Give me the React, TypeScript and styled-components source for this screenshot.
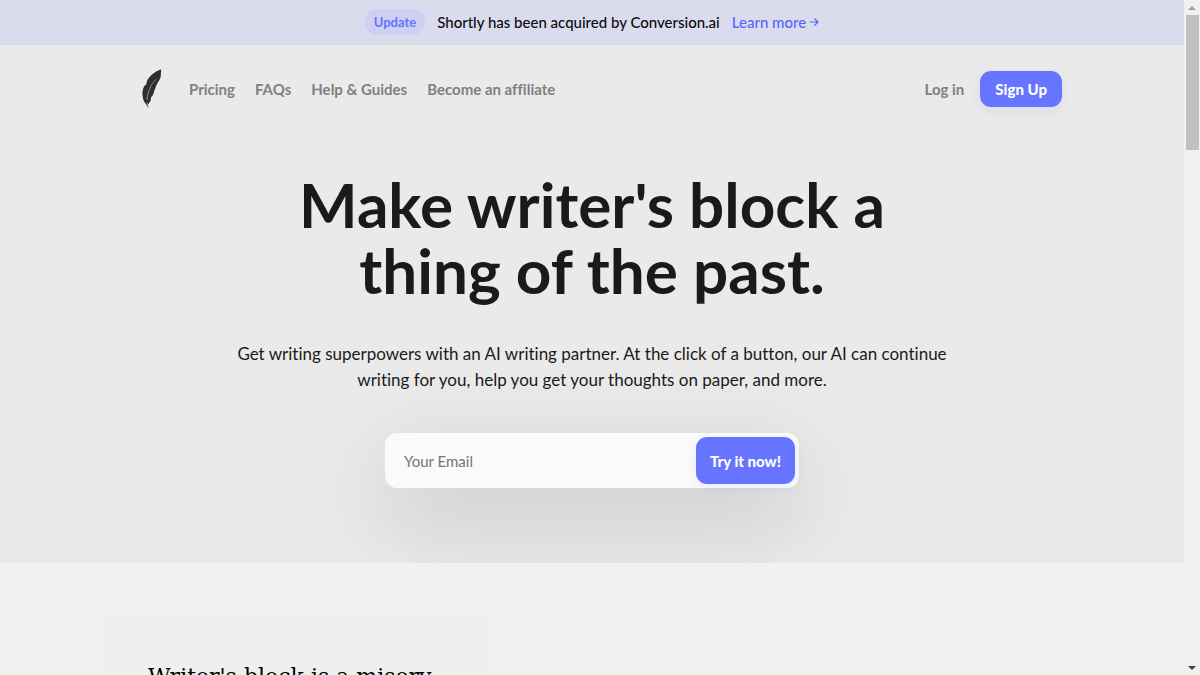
import React from "react";
import styled, { createGlobalStyle } from "styled-components";

const accent = "#6674ff";

const GlobalStyle = createGlobalStyle`
  *, *::before, *::after { box-sizing: border-box; }
  body {
    margin: 0;
    background: #f1f1f1;
    font-family: Lato, "Liberation Sans", sans-serif;
    font-variant-ligatures: none;
    color: #1a1a1a;
  }
  h1, h2, p { margin: 0; }
  a { color: inherit; text-decoration: none; }
  button, input { font: inherit; }
`;

const Shell = styled.div`
  display: grid;
  grid-template-columns: minmax(0, 1fr) 16px;
  height: 100vh;
`;

const Page = styled.div`
  overflow-y: auto;
  scrollbar-width: none;
`;

const Banner = styled.aside`
  display: flex;
  align-items: center;
  justify-content: center;
  gap: 12px;
  min-height: 45px;
  padding-bottom: 1px;
  font-size: 15px;
  font-weight: 500;
  color: #0c0c10;
  background: #dadbed;
`;

const Tag = styled.span`
  padding: 5px 9px;
  border-radius: 12px;
  font-size: 13px;
  line-height: 16px;
  font-weight: 700;
  color: ${accent};
  background: #cdcff3;
`;

const BannerLink = styled.a`
  display: inline-flex;
  align-items: center;
  gap: 4px;
  color: #5765ff;
`;

const Hero = styled.div`
  padding-bottom: 75px;
  background: #eaeaea;
  overflow: hidden;
`;

const Header = styled.header`
  display: flex;
  align-items: center;
  justify-content: space-between;
  max-width: 940px;
  margin: 0 auto;
  padding: 24px 0;
`;

const Nav = styled.nav<{ $gap: number }>`
  display: flex;
  align-items: center;
  gap: ${(p) => p.$gap}px;
  font-size: 15px;
  font-weight: 700;
  color: #808080;
`;

const LogoLink = styled.a`
  display: flex;
  padding: 0 5px 0 18px;
`;

const PrimaryButton = styled.button<{ $tall?: boolean }>`
  flex: none;
  height: ${(p) => (p.$tall ? 47 : 36)}px;
  padding: 0 ${(p) => (p.$tall ? 14 : 15)}px;
  border: 0;
  border-radius: 11px;
  font-size: 15px;
  font-weight: 900;
  color: #fff;
  background: ${accent};
  box-shadow: 0 4px 12px rgba(102, 116, 255, 0.1);
  cursor: pointer;
`;

const Intro = styled.main`
  display: flex;
  flex-direction: column;
  align-items: center;
  padding: 38px 20px 0;
  text-align: center;
`;

const Title = styled.h1`
  max-width: 700px;
  font-size: 62px;
  line-height: 66px;
  font-weight: 700;
  color: #1a1a1a;
`;

const Lead = styled.p`
  max-width: 730px;
  margin-top: 38px;
  font-size: 17px;
  line-height: 26px;
`;

const SignupForm = styled.form`
  display: flex;
  align-items: center;
  width: 100%;
  max-width: 414px;
  margin-top: 40px;
  padding: 4px;
  border-radius: 12px;
  background: #fafafa;
  box-shadow: 0 30px 90px rgba(0, 0, 0, 0.17);
`;

const EmailInput = styled.input`
  flex: 1;
  min-width: 0;
  height: 47px;
  padding: 0 15px;
  border: 0;
  outline: 0;
  font-size: 15px;
  color: #1a1a1a;
  background: transparent;
  &::placeholder { color: #757575; opacity: 1; }
`;

const Stories = styled.section`
  max-width: 980px;
  margin: 0 auto;
  padding: 47px 0;
`;

const StoryCard = styled.article`
  width: 40%;
  padding: 48px 46px;
  background: #efefef;
`;

const StoryTitle = styled.h2`
  font-family: "DejaVu Serif", serif;
  font-size: 22px;
  line-height: 38px;
  font-weight: 400;
  color: #000;
  white-space: nowrap;
`;

const Track = styled.div`
  display: flex;
  flex-direction: column;
  align-items: center;
  background: #f1f1f1;
`;

const Thumb = styled.div`
  width: 13px;
  height: 20%;
  background: #c1c1c1;
`;

const ArrowCell = styled.div<{ $end?: boolean }>`
  display: flex;
  align-items: center;
  justify-content: center;
  height: 15px;
  margin-top: ${(p) => (p.$end ? "auto" : 0)};
`;

const Feather = () => (
  <svg width="24" height="40" viewBox="0 0 24 40" aria-hidden="true">
    <path
      d="M21.200 .5C17.500 1.500 15.500 3 13 4.800C10 7.200 8 9.500 6.800 12.500L6.300 15.500L4.200 17C2.500 20.500 2 24 2.800 28C3.300 31 4.200 33.500 6 35L7.400 37.800L8 35.200C10 33.500 11.200 31.500 11 28.500L13.200 25.500C14 23 14.200 21.500 15.200 19.500L16.500 16L18 13C20 10.500 21 8 20.800 5.500Z"
      fill="#2e2e2e"
    />
    <path d="M15.800 10.500C13 13.500 11.500 15.500 10 19C8.500 23 7.300 26 7 31" fill="none" stroke="#8c8c8c" strokeWidth="1" />
    <path d="M7 33L8 38.500" fill="none" stroke="#777" strokeWidth="1" />
  </svg>
);

const RightArrow = () => (
  <svg width="9" height="10" viewBox="0 0 9 10" aria-hidden="true">
    <path d="M0 5H8M4.500 1.500L8 5L4.500 8.500" fill="none" stroke="currentColor" strokeWidth="1.200" />
  </svg>
);

export default function App() {
  return (
    <>
      <GlobalStyle />
      <Shell>
        <Page>
          <Banner>
            <Tag>Update</Tag>
            <span>Shortly has been acquired by Conversion.ai</span>
            <BannerLink href="#news">
              Learn more <RightArrow />
            </BannerLink>
          </Banner>
          <Hero>
            <Header>
              <Nav aria-label="Main" $gap={20}>
                <LogoLink href="#home" aria-label="Shortly">
                  <Feather />
                </LogoLink>
                <a href="#pricing">Pricing</a>
                <a href="#faqs">FAQs</a>
                <a href="#help">Help &amp; Guides</a>
                <a href="#affiliate">Become an affiliate</a>
              </Nav>
              <Nav aria-label="Account" $gap={16}>
                <a href="#login">Log in</a>
                <PrimaryButton type="button">Sign Up</PrimaryButton>
              </Nav>
            </Header>
            <Intro>
              <Title>Make writer's block a thing of the past.</Title>
              <Lead>
                Get writing superpowers with an AI writing partner. At the click of a button, our AI
                can continue writing for you, help you get your thoughts on paper, and more.
              </Lead>
              <SignupForm>
                <EmailInput type="email" placeholder="Your Email" aria-label="Your Email" />
                <PrimaryButton type="submit" $tall>
                  Try it now!
                </PrimaryButton>
              </SignupForm>
            </Intro>
          </Hero>
          <Stories>
            <StoryCard>
              <StoryTitle>Writer's block is a misery</StoryTitle>
            </StoryCard>
          </Stories>
        </Page>
        <Track aria-hidden="true">
          <ArrowCell>
            <svg width="8" height="4" viewBox="0 0 8 4">
              <path d="M0 4L4 0L8 4Z" fill="#a0a0a0" />
            </svg>
          </ArrowCell>
          <Thumb />
          <ArrowCell $end>
            <svg width="8" height="4" viewBox="0 0 8 4">
              <path d="M0 0H8L4 4Z" fill="#404040" />
            </svg>
          </ArrowCell>
        </Track>
      </Shell>
    </>
  );
}
